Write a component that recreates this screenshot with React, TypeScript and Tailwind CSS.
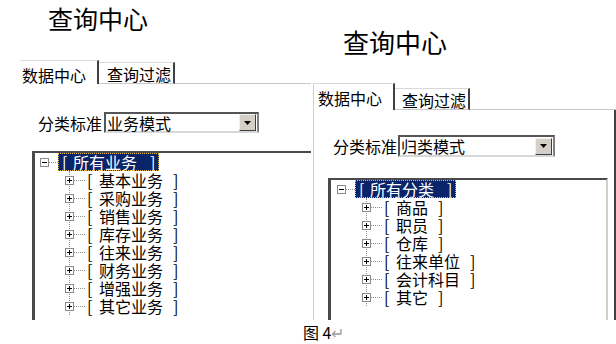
import React from 'react';

const Expander = ({ open }: { open?: boolean }) => (
  <svg width="9" height="9" viewBox="0 0 9 9" className="shrink-0">
    <rect x="0.5" y="0.5" width="8" height="8" fill="#fff" stroke="#8a8a8a" />
    <path d="M2 4.5h5" stroke="#000" />
    {!open && <path d="M4.5 2v5" stroke="#000" />}
  </svg>
);

const DropButton = () => (
  <div className="flex h-[17px] w-[17px] shrink-0 items-center justify-center border border-t-[#f0f0f0] border-l-[#f0f0f0] border-b-[#404040] border-r-[#404040] bg-[#d4d0c8]">
    <svg width="7" height="4" viewBox="0 0 7 4">
      <path d="M0 0h7L3.5 4z" fill="#000" />
    </svg>
  </div>
);

const Select = ({ value, width, height }: { value: string; width: string; height: string }) => (
  <div
    className={`flex ${width} ${height} items-center justify-between border-2 border-t-[#555] border-l-[#555] border-b-[#d8d8d8] border-r-[#808080] bg-white pl-[1px] pr-[1px]`}
  >
    <span className="leading-[18px]">{value}</span>
    <DropButton />
  </div>
);

const Dots = ({ width }: { width: string }) => (
  <span className={`${width} h-0 shrink-0 border-t border-dotted border-[#909090]`} />
);

const TreeView = ({ root, items, pad }: { root: string; items: string[]; pad: string }) => (
  <div className={`${pad} text-[16px] leading-[18px] text-black`}>
    <div className="flex h-[18px] items-center">
      <Expander open />
      <Dots width="w-[9px]" />
      <span className="flex h-[18px] items-center bg-[#0a246a] px-[4px] text-white outline-1 outline-dotted -outline-offset-1 outline-[#e8c040]">
        <span className="w-[11px]">[</span>
        <span>{root}</span>
        <span className="ml-[13px]">]</span>
      </span>
    </div>
    <div className="ml-[29px] border-l border-dotted border-[#909090]">
      {items.map((item) => (
        <div key={item} className="-ml-[5px] flex h-[18px] items-center">
          <Expander />
          <Dots width="w-[11px]" />
          <span className="ml-[2px] w-[12px]">[</span>
          <span>{item}</span>
          <span className="ml-[10px]">]</span>
        </div>
      ))}
    </div>
  </div>
);

const business = ['基本业务', '采购业务', '销售业务', '库存业务', '往来业务', '财务业务', '增强业务', '其它业务'];
const categories = ['商品', '职员', '仓库', '往来单位', '会计科目', '其它'];

const LeftShot = () => (
  <div className="flex h-[320px] w-[311px] shrink-0 flex-col overflow-hidden">
    <div className="h-[36px] pl-[48px] text-[25px] leading-[36px]">查询中心</div>
    <div className="mt-[24px] flex h-[24px] items-end pl-[20px] text-[16px] leading-[18px]">
      <div className="flex h-[24px] w-[79px] items-end border-t border-r-2 border-t-[#dcdcdc] border-r-[#404040] pl-[2px]">
        数据中心
      </div>
      <div className="flex h-[22px] w-[76px] items-end border-t border-r-2 border-b border-t-[#dcdcdc] border-r-[#404040] border-b-[#c8c8c8] pl-[8px]">
        查询过滤
      </div>
      <div className="h-full flex-1 border-b border-[#c8c8c8]" />
    </div>
    <div className="mt-[28px] flex items-center gap-[2px] pl-[38px] text-[16px]">
      <span className="leading-[18px]">分类标准</span>
      <Select value="业务模式" width="w-[155px]" height="h-[21px]" />
    </div>
    <div className="ml-[32px] mt-[18px] w-[300px] flex-1 border-t-2 border-l-[3px] border-[#4a4a4a]">
      <TreeView root="所有业务" items={business} pad="pl-[5px]" />
    </div>
  </div>
);

const RightShot = () => (
  <div className="flex h-[320px] flex-1 flex-col pt-[23px]">
    <div className="h-[38px] pl-[32px] text-[26px] leading-[38px]">查询中心</div>
    <div className="ml-[2px] mt-[22px] flex flex-1 flex-col">
      <div className="flex h-[27px] items-end text-[16px] leading-[18px]">
        <div className="flex h-[27px] w-[82px] items-end border-t border-l border-r-2 border-t-[#d8d8d8] border-l-[#d0d0d0] border-r-[#404040] pb-[3px] pl-[4px]">
          数据中心
        </div>
        <div className="flex h-[22px] w-[75px] items-end border-t border-r-2 border-b border-t-[#d8d8d8] border-r-[#404040] border-b-[#c8c8c8] pl-[7px]">
          查询过滤
        </div>
        <div className="h-full flex-1 border-b border-[#c8c8c8]" />
      </div>
      <div className="flex flex-1 flex-col border-l border-r-2 border-l-[#d0d0d0] border-r-[#404040]">
        <div className="mt-[25px] flex items-center gap-[1px] pl-[19px] text-[16px]">
          <span className="leading-[18px]">分类标准</span>
          <Select value="归类模式" width="w-[157px]" height="h-[22px]" />
        </div>
        <div className="ml-[14px] mt-[21px] w-[280px] flex-1 border-t-2 border-l-[3px] border-r-2 border-t-[#4a4a4a] border-l-[#4a4a4a] border-r-[#d4d0c8]">
          <TreeView root="所有分类" items={categories} pad="pl-[6px]" />
        </div>
      </div>
    </div>
  </div>
);

const App: React.FC = () => {
  return (
    <div className="h-[344px] w-[616px] overflow-hidden bg-white font-['Noto_Sans_CJK_SC','Liberation_Sans',sans-serif] text-black">
      <div className="flex">
        <LeftShot />
        <RightShot />
      </div>
      <div className="h-[24px] pl-[303px] text-[16px] leading-[24px]">
        图 4<span className="text-[#a0a0a0]">↵</span>
      </div>
    </div>
  );
};

export default App;
